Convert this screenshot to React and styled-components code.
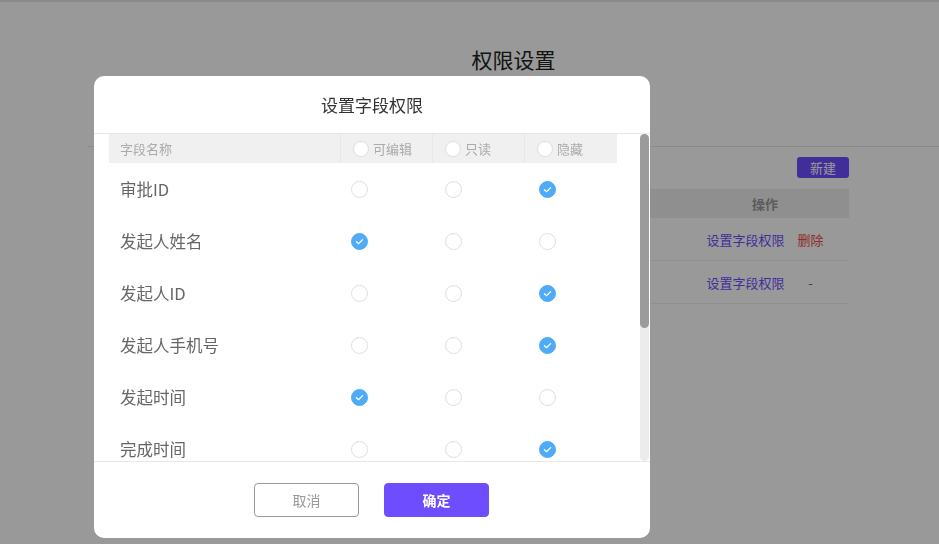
import styled, { createGlobalStyle } from 'styled-components'

const GlobalStyle = createGlobalStyle`
    * {
        box-sizing: border-box;
    }
    body {
        margin: 0;
        overflow: hidden;
        background: #fff;
        font-family: "Noto Sans CJK SC", "Liberation Sans", sans-serif;
    }
`

const fields = [
    { name: '审批ID', value: 'hide' },
    { name: '发起人姓名', value: 'edit' },
    { name: '发起人ID', value: 'hide' },
    { name: '发起人手机号', value: 'hide' },
    { name: '发起时间', value: 'edit' },
    { name: '完成时间', value: 'hide' },
    { name: '审批状态', value: 'read' },
    { name: '审批结果', value: 'hide' },
    { name: '发起部门', value: 'edit' },
    { name: '审批编号', value: 'hide' },
]

const columns = [
    { key: 'edit', label: '可编辑' },
    { key: 'read', label: '只读' },
    { key: 'hide', label: '隐藏' },
]

const records = [
    { id: 1, canDelete: true },
    { id: 2, canDelete: false },
]

/* ---------- page behind the dialog ---------- */

const Page = styled.div`
    display: flex;
    width: 100%;
    height: 544px;
    border-top: 2px solid #e6e6e6;
`

const Sidebar = styled.aside`
    width: 88px;
    flex-shrink: 0;
`

const Main = styled.main`
    flex: 1;
    display: flex;
    flex-direction: column;
`

const PageHeader = styled.header`
    height: 145px;
    padding-top: 42px;
    border-bottom: 1px solid #e6e6e6;
    text-align: center;
`

const PageTitle = styled.h1`
    margin: 0;
    font-size: 21px;
    line-height: 30px;
    font-weight: 400;
    color: #222;
`

const Content = styled.section`
    padding: 10px 90px 0 90px;
`

const Toolbar = styled.div`
    display: flex;
    justify-content: flex-end;
    margin-bottom: 11px;
`

const NewButton = styled.button`
    width: 52px;
    height: 21px;
    padding: 0;
    border: none;
    border-radius: 3px;
    background: #6e4dff;
    color: #fff;
    font-family: inherit;
    font-size: 13px;
    line-height: 21px;
`

const ListRow = styled.div`
    display: grid;
    grid-template-columns: 1fr 168px;
    align-items: center;
    height: ${({ $head }) => ($head ? '29px' : '43px')};
    background: ${({ $head }) => ($head ? '#eee' : 'transparent')};
    border-bottom: ${({ $head }) => ($head ? 'none' : '1px solid #eee')};
    font-size: 13px;
    color: ${({ $head }) => ($head ? '#999' : '#666')};
    font-weight: ${({ $head }) => ($head ? 600 : 400)};
`

const Ops = styled.div`
    display: flex;
    justify-content: center;
    gap: 13px;
`

const OpLink = styled.span`
    color: #6e4dff;
    font-size: 13px;
`

const OpDanger = styled.span`
    width: 26px;
    text-align: center;
    color: ${({ $muted }) => ($muted ? '#666' : '#f04848')};
    font-size: 13px;
`

/* ---------- dialog ---------- */

const Overlay = styled.div`
    position: fixed;
    inset: 0;
    background: rgba(0, 0, 0, 0.4);
    padding: 76px 0 0 94px;
`

const Modal = styled.div`
    width: 556px;
    height: 462px;
    background: #fff;
    border-radius: 10px;
    display: flex;
    flex-direction: column;
    overflow: hidden;
`

const ModalHeader = styled.div`
    height: 58px;
    flex-shrink: 0;
    display: flex;
    align-items: center;
    justify-content: center;
    border-bottom: 1px solid #e8e8e8;
    font-size: 17px;
    color: #333;
`

const ModalBody = styled.div`
    flex: 1;
    min-height: 0;
    display: flex;
    padding-right: 1px;
`

const ScrollArea = styled.div`
    flex: 1;
    overflow: hidden;
    padding: 0 23px 0 15px;
`

const ScrollTrack = styled.div`
    width: 9px;
    flex-shrink: 0;
    background: #ececec;
    border-radius: 5px;
`

const ScrollThumb = styled.div`
    height: 194px;
    background: #9b9b9b;
    border-radius: 5px;
`

const FieldRow = styled.div`
    display: grid;
    grid-template-columns: ${({ $head }) => ($head ? '231px 92px 92px 1fr' : '231px 94px 94px 1fr')};
    align-items: center;
    height: ${({ $head }) => ($head ? '29px' : '52px')};
    background: ${({ $head }) => ($head ? '#f0f0f0' : 'transparent')};
`

const NameCell = styled.div`
    padding-left: 11px;
    font-size: ${({ $head }) => ($head ? '13px' : '16.5px')};
    color: ${({ $head }) => ($head ? '#aaa' : '#666')};
`

const OptionCell = styled.div`
    display: flex;
    align-items: center;
    height: 100%;
    padding-left: ${({ $head }) => ($head ? '12px' : '11px')};
    border-left: ${({ $head }) => ($head ? '1px solid #e8e8e8' : 'none')};
    font-size: 13px;
    color: #aaa;
`

const RadioDot = styled.span`
    display: inline-flex;
    align-items: center;
    justify-content: center;
    width: ${({ $head }) => ($head ? '16px' : '17px')};
    height: ${({ $head }) => ($head ? '16px' : '17px')};
    margin-right: ${({ $head }) => ($head ? '4px' : '0')};
    border-radius: 50%;
    border: 1px solid ${({ $checked }) => ($checked ? '#4fabf8' : '#dedede')};
    background: ${({ $checked }) => ($checked ? '#4fabf8' : '#fff')};
`

const ModalFooter = styled.div`
    height: 77px;
    flex-shrink: 0;
    display: flex;
    align-items: center;
    justify-content: center;
    gap: 25px;
    padding-right: 1px;
    border-top: 1px solid #e8e8e8;
`

const FooterButton = styled.button`
    width: 105px;
    height: 34px;
    border-radius: 4px;
    font-family: inherit;
    font-size: 14px;
    border: 1px solid ${({ $primary }) => ($primary ? '#6e4dff' : '#999')};
    background: ${({ $primary }) => ($primary ? '#6e4dff' : '#fff')};
    color: ${({ $primary }) => ($primary ? '#fff' : '#999')};
    font-weight: ${({ $primary }) => ($primary ? 700 : 400)};
`

const Radio = ({ checked, head }) => (
    <RadioDot $checked={checked} $head={head}>
        {checked && (
            <svg width="11" height="11" viewBox="0 0 16 16">
                <polyline
                    points="3.5,8.3 6.6,11.2 12.5,5.2"
                    fill="none"
                    stroke="#fff"
                    strokeWidth="1.8"
                    strokeLinecap="round"
                    strokeLinejoin="round"
                />
            </svg>
        )}
    </RadioDot>
)

export default function App() {
    return (
        <>
            <GlobalStyle />
            <Page>
                <Sidebar />
                <Main>
                    <PageHeader>
                        <PageTitle>权限设置</PageTitle>
                    </PageHeader>
                    <Content>
                        <Toolbar>
                            <NewButton>新建</NewButton>
                        </Toolbar>
                        <ListRow $head>
                            <div />
                            <Ops>操作</Ops>
                        </ListRow>
                        {records.map((r) => (
                            <ListRow key={r.id}>
                                <div />
                                <Ops>
                                    <OpLink>设置字段权限</OpLink>
                                    {r.canDelete ? (
                                        <OpDanger>删除</OpDanger>
                                    ) : (
                                        <OpDanger $muted>-</OpDanger>
                                    )}
                                </Ops>
                            </ListRow>
                        ))}
                    </Content>
                </Main>
            </Page>

            <Overlay>
                <Modal>
                    <ModalHeader>设置字段权限</ModalHeader>
                    <ModalBody>
                        <ScrollArea>
                            <FieldRow $head>
                                <NameCell $head>字段名称</NameCell>
                                {columns.map((c) => (
                                    <OptionCell $head key={c.key}>
                                        <Radio head />
                                        {c.label}
                                    </OptionCell>
                                ))}
                            </FieldRow>
                            {fields.map((f) => (
                                <FieldRow key={f.name}>
                                    <NameCell>{f.name}</NameCell>
                                    {columns.map((c) => (
                                        <OptionCell key={c.key}>
                                            <Radio checked={f.value === c.key} />
                                        </OptionCell>
                                    ))}
                                </FieldRow>
                            ))}
                        </ScrollArea>
                        <ScrollTrack>
                            <ScrollThumb />
                        </ScrollTrack>
                    </ModalBody>
                    <ModalFooter>
                        <FooterButton>取消</FooterButton>
                        <FooterButton $primary>确定</FooterButton>
                    </ModalFooter>
                </Modal>
            </Overlay>
        </>
    )
}
